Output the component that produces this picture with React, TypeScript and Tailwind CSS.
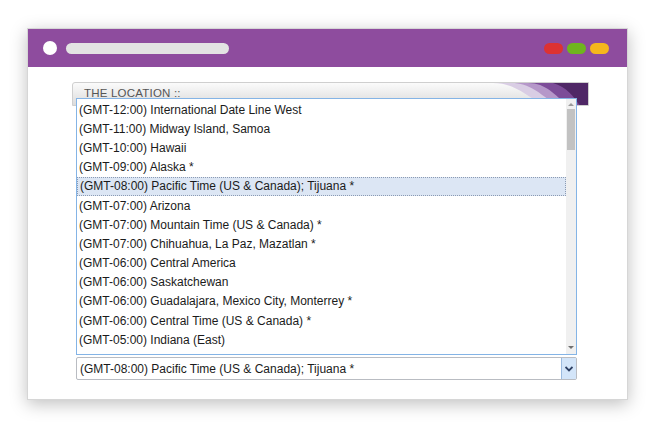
import React from 'react';

const zones = [
  '(GMT-12:00) International Date Line West',
  '(GMT-11:00) Midway Island, Samoa',
  '(GMT-10:00) Hawaii',
  '(GMT-09:00) Alaska *',
  '(GMT-08:00) Pacific Time (US & Canada); Tijuana *',
  '(GMT-07:00) Arizona',
  '(GMT-07:00) Mountain Time (US & Canada) *',
  '(GMT-07:00) Chihuahua, La Paz, Mazatlan *',
  '(GMT-06:00) Central America',
  '(GMT-06:00) Saskatchewan',
  '(GMT-06:00) Guadalajara, Mexico City, Monterrey *',
  '(GMT-06:00) Central Time (US & Canada) *',
  '(GMT-05:00) Indiana (East)',
];

const selected = 4;

const App: React.FC = () => {
  return (
    <div className="w-[648px] h-[432px] bg-white pt-[28px] pl-[27px] font-['Liberation_Sans',Arial,sans-serif]">
      <div className="w-[601px] h-[372px] bg-white border border-[#d6d6d6] shadow-[0_4px_16px_rgba(0,0,0,0.25)] flex flex-col">
        {/* title bar */}
        <div className="h-[38px] bg-[#8e4c9e] flex items-center pl-[15px] pr-[18px]">
          <div className="w-[14px] h-[14px] rounded-full bg-white" />
          <div className="ml-[9px] w-[163px] h-[11px] rounded-full bg-[#e3e3e3]" />
          <div className="ml-auto flex gap-[4px]">
            <div className="w-[19px] h-[11px] rounded-full bg-[#dd3232]" />
            <div className="w-[19px] h-[11px] rounded-full bg-[#6fb51e]" />
            <div className="w-[19px] h-[11px] rounded-full bg-[#f5b71c]" />
          </div>
        </div>

        <div className="flex-1 pt-[15px] pl-[44px]">
          {/* header bar */}
          <div className="relative w-[517px] h-[24px] rounded-tl-[3px] border border-[#cfcfcf] bg-gradient-to-b from-[#fbfbfb] to-[#dcdcdc] overflow-hidden">
            <span className="absolute left-[11px] top-[5px] text-[11.5px] leading-none text-[#555] tracking-[0.2px]">THE LOCATION ::</span>
            <svg className="absolute right-0 top-0" width="95" height="24" viewBox="0 0 95 24">
              <path d="M0 0 C20 0 30 10 50 22 L95 24 L95 0 Z" fill="#d9cde4" />
              <path d="M18 0 C38 0 48 12 66 24 L95 24 L95 0 Z" fill="#b597c9" />
              <path d="M35 0 C55 0 62 14 78 24 L95 24 L95 0 Z" fill="#7c4c98" />
              <path d="M60 0 C75 4 82 16 88 24 L95 24 L95 0 Z" fill="#4f2766" />
            </svg>
          </div>

          {/* open list */}
          <div className="relative -mt-[8px] ml-[4px] w-[501px] h-[257px] bg-white border border-[#84b4e6] overflow-hidden flex">
            <div className="flex-1 overflow-hidden pt-[1px]">
              {zones.map((z, i) => (
                <div
                  key={i}
                  className={`h-[19.2px] pl-[2px] flex items-center text-[12px] text-[#1b1b1b] whitespace-nowrap ${
                    i === selected ? 'bg-[#dce6f4] border border-dotted border-[#8b9bb3] pl-[1px]' : ''
                  }`}
                >
                  {z}
                </div>
              ))}
            </div>
            <div className="w-[10px] bg-[#f0f0f0] flex flex-col items-center">
              <svg className="mt-[3px]" width="6" height="4" viewBox="0 0 6 4">
                <path d="M0 4 L3 1 L6 4 Z" fill="#9a9a9a" />
              </svg>
              <div className="mt-[3px] w-[8px] h-[41px] bg-[#c2c2c2]" />
              <svg className="mt-auto mb-[4px]" width="6" height="4" viewBox="0 0 6 4">
                <path d="M0 0 L3 3 L6 0 Z" fill="#707070" />
              </svg>
            </div>
          </div>

          {/* select box */}
          <div className="mt-[2px] ml-[4px] w-[501px] h-[23px] rounded-[2px] border border-[#b9bcc2] bg-white flex items-center">
            <span className="flex-1 pl-[3px] text-[12px] text-[#1b1b1b] whitespace-nowrap">{zones[selected]}</span>
            <div className="w-[15px] h-full bg-[#d3e5f9] border-l border-[#9bbbe0] flex items-center justify-center">
              <svg width="8" height="6" viewBox="0 0 8 6">
                <path d="M0.5 1 L4 4.5 L7.5 1" stroke="#2d3f63" strokeWidth="1.8" fill="none" />
              </svg>
            </div>
          </div>
        </div>
      </div>
    </div>
  );
};

export default App;
